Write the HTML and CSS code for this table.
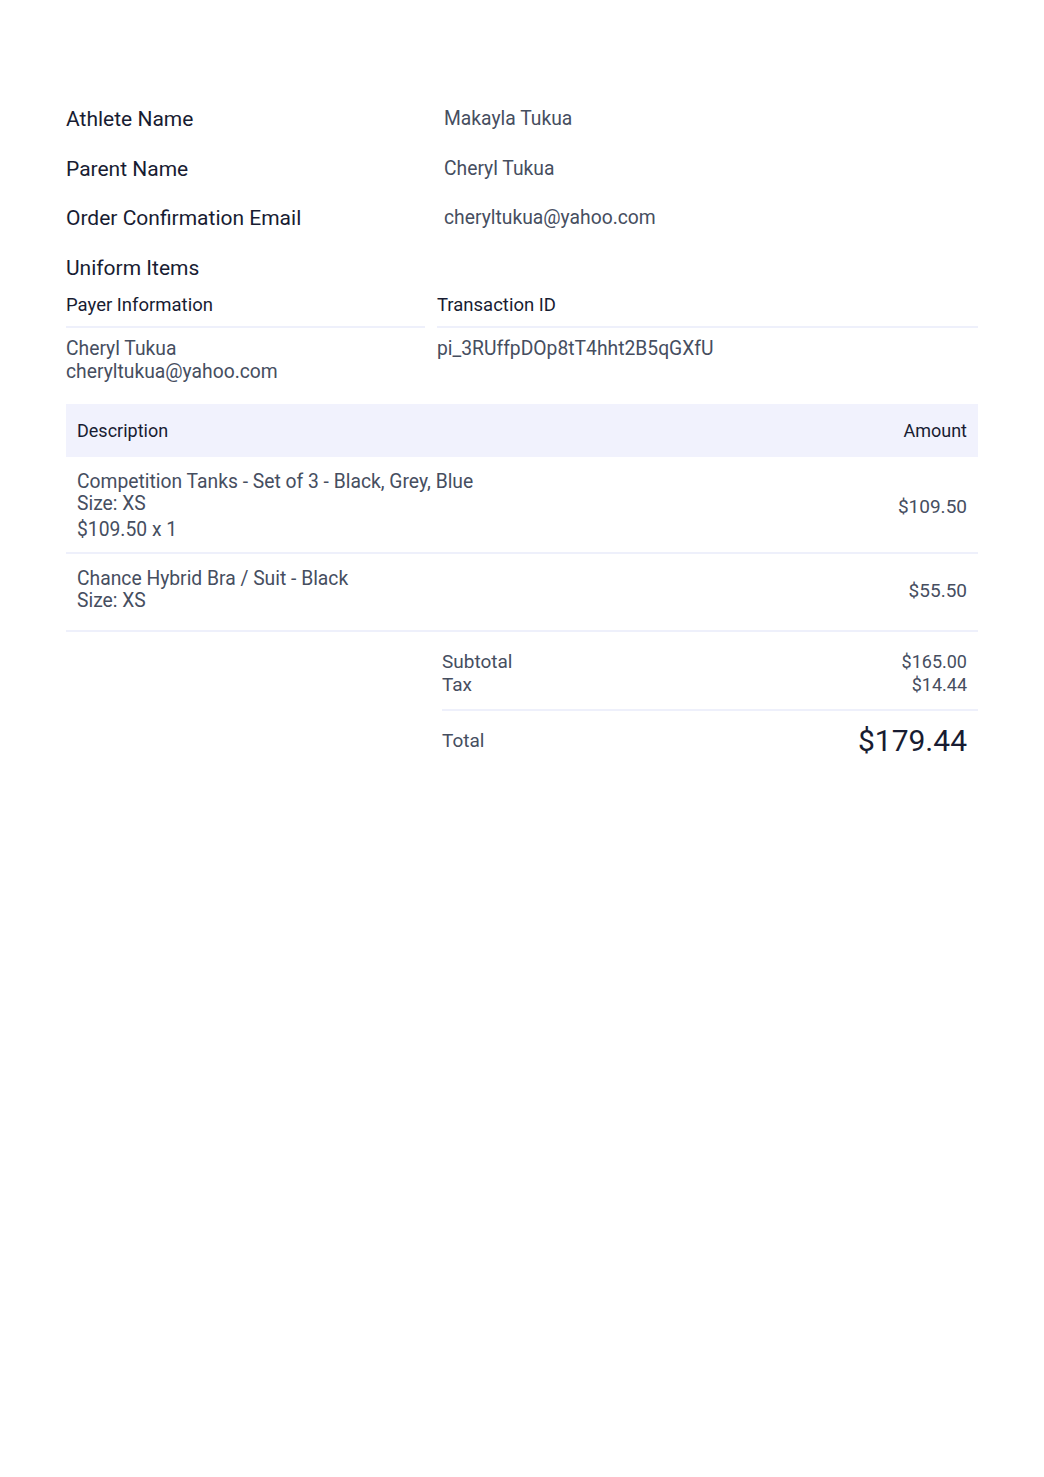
FILE: index.html
```html
<!DOCTYPE html>
<html lang="en">
<head>
<meta charset="utf-8">
<title>Order Receipt</title>
<link rel="stylesheet" href="styles.css">
</head>
<body>
<main class="page">
  <section class="info">
    <div class="info-row"><div class="info-label">Athlete Name</div><div class="info-value">Makayla Tukua</div></div>
    <div class="info-row"><div class="info-label">Parent Name</div><div class="info-value">Cheryl Tukua</div></div>
    <div class="info-row"><div class="info-label">Order Confirmation Email</div><div class="info-value">cheryltukua@yahoo.com</div></div>
    <div class="info-row"><div class="info-label">Uniform Items</div><div class="info-value"></div></div>
  </section>

  <section class="payer">
    <div class="payer-col">
      <div class="payer-head">Payer Information</div>
      <div class="payer-body">Cheryl Tukua<br>cheryltukua@yahoo.com</div>
    </div>
    <div class="payer-col">
      <div class="payer-head">Transaction ID</div>
      <div class="payer-body">pi_3RUffpDOp8tT4hht2B5qGXfU</div>
    </div>
  </section>

  <section class="items">
    <div class="items-head">
      <span>Description</span>
      <span>Amount</span>
    </div>
    <div class="item">
      <div class="item-desc">
        <div class="item-name">Competition Tanks - Set of 3 - Black, Grey, Blue</div>
        <div class="item-size">Size: XS</div>
        <div class="item-qty">$109.50 x 1</div>
      </div>
      <div class="item-amount">$109.50</div>
    </div>
    <div class="item item-short">
      <div class="item-desc">
        <div class="item-name">Chance Hybrid Bra / Suit - Black</div>
        <div class="item-size">Size: XS</div>
      </div>
      <div class="item-amount">$55.50</div>
    </div>
  </section>

  <section class="totals">
    <div class="sub">
      <div class="sub-row"><span>Subtotal</span><span class="sub-value">$165.00</span></div>
      <div class="sub-row"><span>Tax</span><span class="sub-value">$14.44</span></div>
    </div>
    <div class="grand">
      <span class="grand-label">Total</span>
      <span class="grand-value">$179.44</span>
    </div>
  </section>
</main>
</body>
</html>
```

FILE: styles.css
```css
* { box-sizing: border-box; }

html, body {
  margin: 0;
  padding: 0;
  background: #ffffff;
}

body {
  font-family: Roboto, "Noto Sans", "Liberation Sans", sans-serif;
  color: #181c32;
}

.page {
  width: 912px;
  margin: 0 auto;
  padding-top: 95px;
}

.info-row {
  display: grid;
  grid-template-columns: 378px 1fr;
  padding: 12px 0;
  min-height: 49.5px;
  align-items: center;
}

.info-label {
  font-size: 21px;
  line-height: 25.5px;
  color: #181c32;
}

.info-value {
  font-size: 19.3px;
  line-height: 25.5px;
  color: #464e5f;
  position: relative;
  top: -1px;
}

.payer {
  display: grid;
  grid-template-columns: 359px 1fr;
  column-gap: 12px;
  margin-top: 1px;
}

.payer-head {
  font-size: 18.5px;
  line-height: 22px;
  color: #181c32;
  padding-bottom: 10px;
  border-bottom: 2px solid #eef0fb;
}

.payer-body {
  font-size: 19.3px;
  line-height: 23px;
  color: #464e5f;
  padding-top: 9px;
}

.items {
  margin-top: 21px;
}

.items-head {
  display: flex;
  justify-content: space-between;
  background: #f1f2fd;
  padding: 15px 11px;
  font-size: 18px;
  line-height: 23px;
  color: #181c32;
}

.item {
  display: flex;
  justify-content: space-between;
  align-items: center;
  padding: 14px 11px 11px;
  border-bottom: 2px solid #eef0fb;
  color: #464e5f;
  font-size: 19.3px;
}

.item-short {
  padding-bottom: 18px;
}

.item-name,
.item-size {
  line-height: 22px;
}

.item-qty {
  line-height: 22px;
  margin-top: 4px;
}

.item-amount {
  font-size: 19px;
  line-height: 22px;
  position: relative;
  top: 1px;
}

.totals {
  margin-left: 376px;
  color: #464e5f;
  font-size: 19px;
}

.sub {
  padding: 18px 11px 13px 0;
  border-bottom: 2px solid #eef0fb;
}

.sub-row {
  display: flex;
  justify-content: space-between;
  line-height: 23px;
}

.sub-value {
  font-size: 18px;
}

.grand {
  display: flex;
  justify-content: space-between;
  align-items: center;
  padding: 10px 11px 10px 0;
}

.grand-label {
  font-size: 19px;
}

.grand-value {
  font-size: 30px;
  line-height: 38px;
  color: #181c32;
  position: relative;
  top: 1px;
}
```
